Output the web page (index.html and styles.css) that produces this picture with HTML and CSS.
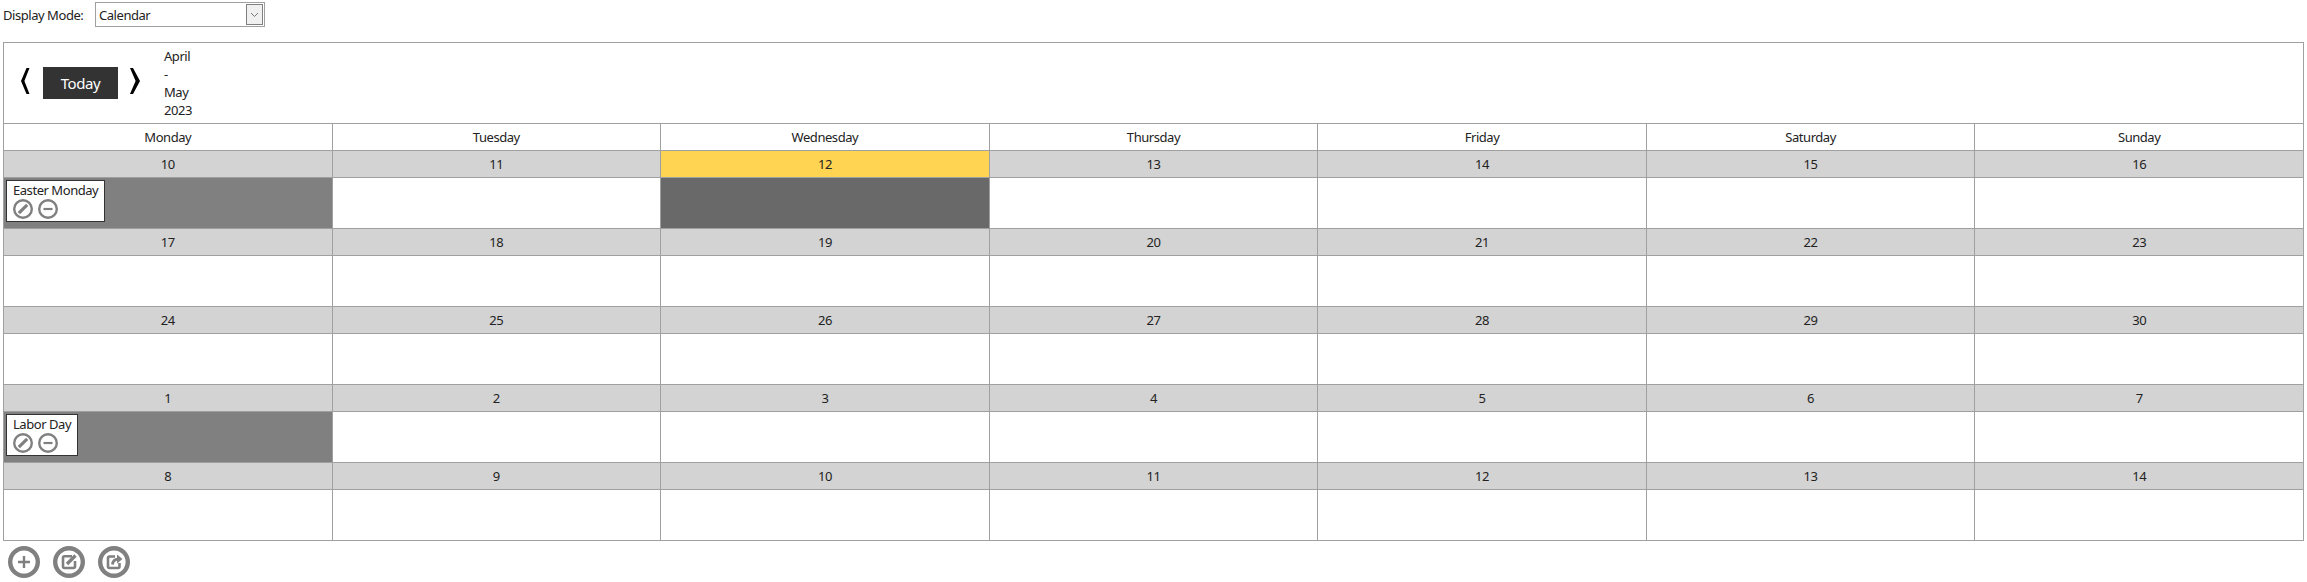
FILE: index.html
```html
<!DOCTYPE html>
<html lang="en">
<head>
    <meta charset="UTF-8">
    <title>Calendar</title>
    <link rel="stylesheet" href="styles.css">
</head>
<body>
    <svg class="defs" width="0" height="0">
        <symbol id="i-edit" viewBox="0 0 20 20">
            <circle cx="10" cy="10" r="8.8" fill="none" stroke="#808080" stroke-width="2.4"/>
            <path d="M5.8 14.2 L14.2 5.8" stroke="#808080" stroke-width="3.2" fill="none"/>
        </symbol>
        <symbol id="i-minus" viewBox="0 0 20 20">
            <circle cx="10" cy="10" r="8.8" fill="none" stroke="#808080" stroke-width="2.4"/>
            <path d="M5.5 10 H14.5" stroke="#808080" stroke-width="2.2" fill="none"/>
        </symbol>
        <symbol id="i-add" viewBox="0 0 32 32">
            <circle cx="16" cy="16" r="13.8" fill="none" stroke="#808080" stroke-width="4.4"/>
            <path d="M16 10 V22 M10 16 H22" stroke="#808080" stroke-width="2.4" fill="none"/>
        </symbol>
        <symbol id="i-edit-box" viewBox="0 0 32 32">
            <circle cx="16" cy="16" r="13.8" fill="none" stroke="#808080" stroke-width="4.4"/>
            <path d="M19 10.2 H11.5 Q10 10.2 10 11.7 V20.5 Q10 22 11.5 22 H20.5 Q22 22 22 20.5 V15" stroke="#808080" stroke-width="2.6" fill="none"/>
            <path d="M14 18 L22.5 9.5" stroke="#808080" stroke-width="3.4" fill="none"/>
        </symbol>
        <symbol id="i-export" viewBox="0 0 32 32">
            <circle cx="16" cy="16" r="13.8" fill="none" stroke="#808080" stroke-width="4.4"/>
            <path d="M17 10.5 H11.5 Q10 10.5 10 12 V20.5 Q10 22 11.5 22 H20 Q21.5 22 21.5 20.5 V17" stroke="#808080" stroke-width="2.6" fill="none"/>
            <path d="M14.5 18.5 Q15 13.5 20 13.2" stroke="#808080" stroke-width="2.8" fill="none"/>
            <path d="M19 8.5 L24.5 13 L19 17.5 Z" fill="#808080"/>
        </symbol>
    </svg>

    <div class="mode">
        <label class="mode-label" for="mode">Display Mode:</label>
        <div class="select-wrap">
            <select id="mode" class="mode-select">
                <option>Calendar</option>
            </select>
            <span class="select-arrow">
                <svg width="9" height="6" viewBox="0 0 9 6"><path d="M1 1 L4.5 4.5 L8 1" fill="none" stroke="#777" stroke-width="1"/></svg>
            </span>
        </div>
    </div>

    <table class="cal">
        <tr class="cal-top">
            <td colspan="7">
                <div class="nav">
                    <svg class="chev" width="16" height="28" viewBox="0 0 16 28"><path d="M12.5 1 H9.5 L4 14 L9.5 27 H12.5 L7.4 14 Z" fill="#000"/></svg>
                    <button class="today">Today</button>
                    <svg class="chev" width="16" height="28" viewBox="0 0 16 28"><path d="M2 1 H5 L12 14 L5 27 H2 L7.6 14 Z" fill="#000"/></svg>
                    <div class="range">April - May 2023</div>
                </div>
            </td>
        </tr>
        <tr class="days">
            <td>Monday</td><td>Tuesday</td><td>Wednesday</td><td>Thursday</td><td>Friday</td><td>Saturday</td><td>Sunday</td>
        </tr>
        <tr class="dates">
            <td>10</td><td>11</td><td class="now">12</td><td>13</td><td>14</td><td>15</td><td>16</td>
        </tr>
        <tr class="week">
            <td class="holiday">
                <div class="event">
                    <div>Easter Monday</div>
                    <div class="event-btns">
                        <svg width="20" height="20"><use href="#i-edit"/></svg>
                        <svg width="20" height="20"><use href="#i-minus"/></svg>
                    </div>
                </div>
            </td>
            <td></td><td class="now-cell"></td><td></td><td></td><td></td><td></td>
        </tr>
        <tr class="dates">
            <td>17</td><td>18</td><td>19</td><td>20</td><td>21</td><td>22</td><td>23</td>
        </tr>
        <tr class="week">
            <td></td><td></td><td></td><td></td><td></td><td></td><td></td>
        </tr>
        <tr class="dates">
            <td>24</td><td>25</td><td>26</td><td>27</td><td>28</td><td>29</td><td>30</td>
        </tr>
        <tr class="week">
            <td></td><td></td><td></td><td></td><td></td><td></td><td></td>
        </tr>
        <tr class="dates">
            <td>1</td><td>2</td><td>3</td><td>4</td><td>5</td><td>6</td><td>7</td>
        </tr>
        <tr class="week">
            <td class="holiday">
                <div class="event">
                    <div>Labor Day</div>
                    <div class="event-btns">
                        <svg width="20" height="20"><use href="#i-edit"/></svg>
                        <svg width="20" height="20"><use href="#i-minus"/></svg>
                    </div>
                </div>
            </td>
            <td></td><td></td><td></td><td></td><td></td><td></td>
        </tr>
        <tr class="dates">
            <td>8</td><td>9</td><td>10</td><td>11</td><td>12</td><td>13</td><td>14</td>
        </tr>
        <tr class="week">
            <td></td><td></td><td></td><td></td><td></td><td></td><td></td>
        </tr>
    </table>

    <div class="actions">
        <svg width="32" height="32"><use href="#i-add"/></svg>
        <svg width="32" height="32"><use href="#i-edit-box"/></svg>
        <svg width="32" height="32"><use href="#i-export"/></svg>
    </div>
</body>
</html>
```

FILE: styles.css
```css
body {
    font-family: "Noto Sans", sans-serif;
    font-size: 13px;
    letter-spacing: -0.45px;
    color: #222;
    background-color: #fff;
    margin: 0;
}

.defs {
    display: block;
    height: 0;
}

.mode {
    display: flex;
    align-items: center;
    height: 25px;
    margin: 2px 0 15px 3px;
}

.mode-label {
    width: 92px;
}

.select-wrap {
    position: relative;
    width: 170px;
    height: 25px;
}

.mode-select {
    appearance: none;
    width: 100%;
    height: 100%;
    padding: 0 0 0 3px;
    border: 1px solid #a0a0a0;
    border-radius: 0;
    background: #fff;
    color: #222;
    font: inherit;
    letter-spacing: inherit;
}

.select-arrow {
    position: absolute;
    top: 2px;
    right: 2px;
    width: 17px;
    height: 21px;
    display: flex;
    align-items: center;
    justify-content: center;
    box-sizing: border-box;
    border: 1px solid #808080;
    background: #f0f0f0;
}

.cal {
    border-collapse: collapse;
    table-layout: fixed;
    width: 2301px;
    margin-left: 3px;
}

.cal td {
    border: 1px solid #a0a0a0;
    padding: 0;
    text-align: center;
}

.cal-top {
    height: 81px;
}

.nav {
    display: flex;
    align-items: center;
    padding-left: 13px;
    text-align: left;
}

.chev {
    margin-top: -4px;
}

.today {
    width: 75px;
    height: 32px;
    margin: 0 10px;
    border: 0;
    background-color: #333;
    color: #fff;
    font-family: inherit;
    font-size: 15px;
    letter-spacing: -0.4px;
}

.range {
    width: min-content;
    margin-left: 20px;
    line-height: 18px;
}

.days,
.dates {
    height: 27px;
}

.dates td {
    background-color: #d3d3d3;
}

.dates td.now {
    background-color: #ffd452;
}

.week {
    height: 51px;
}

.cal td.holiday {
    background-color: #808080;
    padding: 2px;
    text-align: left;
    vertical-align: top;
}

.cal td.now-cell {
    background-color: #696969;
}

.event {
    display: inline-block;
    box-sizing: border-box;
    height: 42px;
    padding: 0 6px;
    border: 1px solid #333;
    background-color: #fff;
    line-height: 18px;
}

.event-btns {
    display: flex;
    gap: 5px;
}

.actions {
    display: flex;
    gap: 13px;
    padding: 5px 0 0 8px;
}
```
